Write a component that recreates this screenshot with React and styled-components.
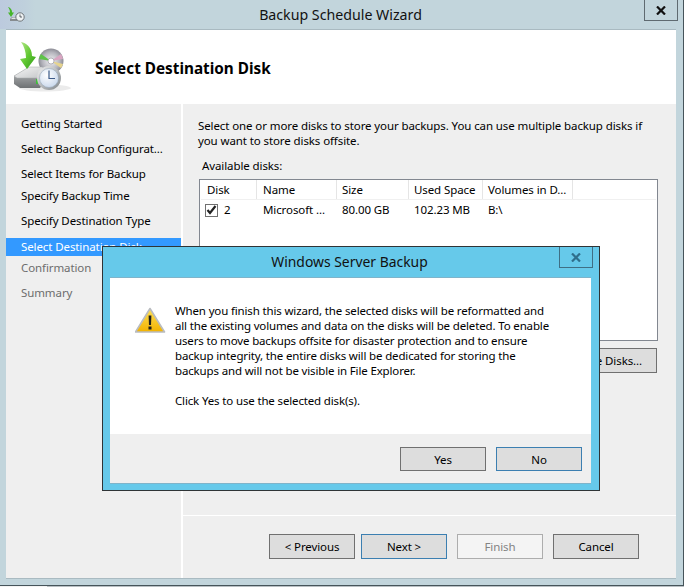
import styled, { createGlobalStyle } from "styled-components";

const GlobalStyle = createGlobalStyle`
  html, body {
    margin: 0;
    padding: 0;
    background: #e9edef;
    overflow: hidden;
  }
  body {
    font-family: "Noto Sans", "Open Sans", sans-serif;
    font-size: 11.5px;
    color: #000;
  }
`;

const Page = styled.div`
  position: relative;
  width: 684px;
  height: 587px;
  overflow: hidden;
`;

const Window = styled.div`
  box-sizing: border-box;
  width: 684px;
  height: 586px;
  background: #c2d5dc;
  border-right: 1px solid #46545a;
  border-bottom: 1px solid #46545a;
  display: flex;
  flex-direction: column;
`;

const TitleBar = styled.div`
  height: 29px;
  display: flex;
  align-items: flex-start;
  flex-shrink: 0;
`;

const TitleIconBox = styled.div`
  width: 35px;
  height: 29px;
  background: linear-gradient(90deg, #bccade 0%, #bfd0dc 70%, #c2d5dc 100%);
  padding: 5px 0 0 8px;
  box-sizing: border-box;
`;

const Title = styled.div`
  flex: 1;
  padding-left: 2px;
  text-align: center;
  font-size: 14.2px;
  line-height: 29px;
  color: #111;
`;

const CloseButton = styled.div`
  box-sizing: border-box;
  width: 34px;
  height: 21px;
  margin-right: ${(props) => props.$right || "5px"};
  border: 1px solid ${(props) => props.$line || "#5f6a70"};
  border-top: none;
  display: flex;
  align-items: center;
  justify-content: center;
`;

const Client = styled.div`
  flex: 1;
  margin: 0 7px 7px 6px;
  display: flex;
  flex-direction: column;
  border-top: 1px solid #a9bac1;
  box-shadow: 0 1px 0 #a9bac1;
  background: #efefef;
`;

const Header = styled.div`
  height: 74px;
  flex-shrink: 0;
  background: #fff;
  display: flex;
  align-items: center;
  padding-left: 7px;
`;

const HeaderText = styled.h1`
  margin: 0 0 0 22px;
  font-size: 15.3px;
  font-weight: 700;
  line-height: 20px;
  position: relative;
  top: 1px;
`;

const Body = styled.div`
  flex: 1;
  display: flex;
  min-height: 0;
`;

const Nav = styled.div`
  width: 175px;
  flex-shrink: 0;
  padding-top: 11px;
  box-sizing: border-box;
`;

const NavItem = styled.div`
  height: 18px;
  line-height: 18px;
  padding-left: 15px;
  margin-bottom: ${(props) => props.$gap}px;
  white-space: nowrap;
  letter-spacing: -0.1px;
  color: ${(props) =>
    props.$active ? "#fff" : props.$muted ? "#6d6d6d" : "#000"};
  background: ${(props) => (props.$active ? "#3399ff" : "transparent")};
`;

const Main = styled.div`
  flex: 1;
  border-left: 2px solid #fff;
  display: flex;
  flex-direction: column;
  min-width: 0;
`;

const Content = styled.div`
  height: 412px;
  flex-shrink: 0;
  box-sizing: border-box;
  padding: 14px 18px 0 15px;
  border-bottom: 1px solid #fff;
`;

const Intro = styled.p`
  margin: 0;
  line-height: 15px;
  letter-spacing: -0.1px;
  white-space: nowrap;
`;

const ListLabel = styled.div`
  margin: 10px 0 0 4px;
  line-height: 15px;
  letter-spacing: -0.1px;
`;

const DiskList = styled.div`
  box-sizing: border-box;
  margin: 6px 0 0 1px;
  height: 162px;
  background: #fff;
  border: 1px solid #828790;
  padding: 0 1px;
`;

const HeadRow = styled.div`
  display: flex;
  height: 19px;
  border-bottom: 1px solid #f0f0f0;
`;

const HeadCell = styled.div`
  box-sizing: border-box;
  width: ${(props) => props.$w}px;
  padding-left: ${(props) => props.$pad || 5}px;
  line-height: 19px;
  letter-spacing: -0.1px;
  white-space: nowrap;
  border-right: 1px solid #e5e5e5;
`;

const DiskRow = styled.div`
  display: flex;
  height: 20px;
  align-items: center;
`;

const DiskCell = styled(HeadCell)`
  display: flex;
  align-items: center;
  border-right: none;
  line-height: 20px;
`;

const Check = styled.div`
  box-sizing: border-box;
  width: 13px;
  height: 13px;
  margin: 0 6px 0 -2px;
  border: 1px solid #707070;
  display: flex;
  align-items: center;
  justify-content: center;
`;

const ListActions = styled.div`
  display: flex;
  justify-content: flex-end;
  margin-top: 7px;
  padding-right: 1px;
`;

const Button = styled.div`
  box-sizing: border-box;
  width: ${(props) => props.$w || 86}px;
  height: ${(props) => props.$h || 25}px;
  display: flex;
  align-items: center;
  justify-content: center;
  white-space: nowrap;
  letter-spacing: -0.1px;
  background: ${(props) => (props.$disabled ? "#f4f4f4" : "#dddddd")};
  color: ${(props) => (props.$disabled ? "#838383" : "#000")};
  border: 1px solid
    ${(props) =>
      props.$disabled ? "#adadad" : props.$default ? "#3c7fb1" : "#707070"};
`;

const Footer = styled.div`
  flex: 1;
  display: flex;
  align-items: flex-start;
  padding: 18px 37px 0 86px;
`;

const FooterGap = styled.div`
  width: ${(props) => props.$w}px;
  flex-shrink: 0;
`;

const Dialog = styled.div`
  position: absolute;
  left: 102px;
  top: 246px;
  box-sizing: border-box;
  width: 498px;
  height: 245px;
  background: #66c9ea;
  border: 1px solid #2f3436;
  display: flex;
  flex-direction: column;
`;

const DialogTitleBar = styled.div`
  height: 30px;
  flex-shrink: 0;
  display: flex;
  align-items: flex-start;
`;

const DialogTitle = styled.div`
  flex: 1;
  padding-left: 37px;
  text-align: center;
  font-size: 13.9px;
  line-height: 30px;
  color: #111;
`;

const DialogClient = styled.div`
  flex: 1;
  margin: 0 8px 7px 7px;
  display: flex;
  flex-direction: column;
  border-top: 1px solid #7fb4ca;
  box-shadow: 0 1px 0 #7fb4ca;
  background: #efefef;
`;

const Message = styled.div`
  height: 156px;
  flex-shrink: 0;
  box-sizing: border-box;
  background: #fff;
  padding: 25px 0 0 25px;
  display: flex;
`;

const WarnIcon = styled.div`
  width: 40px;
  flex-shrink: 0;
  padding-top: 4px;
`;

const MessageText = styled.div`
  line-height: 15px;
  letter-spacing: -0.15px;
  white-space: nowrap;
`;

const MessageLine = styled.div`
  margin-top: ${(props) => props.$gap || 0}px;
`;

const DialogActions = styled.div`
  flex: 1;
  display: flex;
  justify-content: flex-end;
  gap: 10px;
  padding: 13px 9px 0 0;
`;

const BottomStrip = styled.div`
  height: 1px;
  background: linear-gradient(90deg, #f3f3f3 47px, #b9c0c4 47px);
`;

const SmallIcon = () => (
  <svg width="19" height="18" viewBox="0 0 19 18">
    <path d="M0 2c2 .5 4 2 4.200 5.500H6L3 12 0 7.500h2C2 5.500 1.200 3.500 0 2z" fill="#46b52a" />
    <path d="M2 14l2-2h5v4H2z" fill="#868b8f" />
    <path d="M3 14l1.500-1.500H9V14z" fill="#e2e4e6" />
    <circle cx="12" cy="12" r="4.200" fill="#eef1f3" stroke="#6d7478" />
    <path d="M12 9.500V12h2" fill="none" stroke="#3b4348" strokeWidth="0.800" />
  </svg>
);

const WizardIcon = () => (
  <svg width="60" height="54" viewBox="0 0 60 54">
    <defs>
      <linearGradient id="arrowFill" x1="0" y1="0" x2="1" y2="1">
        <stop offset="0" stopColor="#b5e88a" />
        <stop offset="0.5" stopColor="#62c832" />
        <stop offset="1" stopColor="#2d9a1a" />
      </linearGradient>
      <linearGradient id="driveTop" x1="0" y1="0" x2="1" y2="1">
        <stop offset="0" stopColor="#f6f6f6" />
        <stop offset="1" stopColor="#c4c6c8" />
      </linearGradient>
      <linearGradient id="driveFront" x1="0" y1="0" x2="0" y2="1">
        <stop offset="0" stopColor="#c2c4c6" />
        <stop offset="1" stopColor="#6e7173" />
      </linearGradient>
      <radialGradient id="discFill" cx="0.5" cy="0.5" r="0.5">
        <stop offset="0" stopColor="#f4f4f6" />
        <stop offset="0.7" stopColor="#b4b4bc" />
        <stop offset="1" stopColor="#8d8d96" />
      </radialGradient>
      <radialGradient id="faceFill" cx="0.4" cy="0.35" r="0.75">
        <stop offset="0" stopColor="#ffffff" />
        <stop offset="1" stopColor="#c5d5ea" />
      </radialGradient>
      <linearGradient id="rimFill" x1="0" y1="0" x2="1" y2="1">
        <stop offset="0" stopColor="#f2f2f2" />
        <stop offset="1" stopColor="#7f8589" />
      </linearGradient>
    </defs>
    <ellipse cx="32" cy="48" rx="26" ry="3.500" fill="#000" opacity="0.08" />
    <circle cx="38" cy="21" r="12.500" fill="url(#discFill)" />
    <path d="M38 21L28 14a12.500 12.500 0 0 0-2 5z" fill="#5ec24a" />
    <path d="M38 21L50 19a12.500 12.500 0 0 0-2-5z" fill="#d9a6c2" />
    <path d="M38 21L50 24a12.500 12.500 0 0 1-2 4z" fill="#e6d48e" />
    <circle cx="38" cy="21" r="3" fill="#fff" stroke="#8a8a92" strokeWidth="0.600" />
    <path d="M1 36l15-9h14l3 12-6 9H7l-6-4z" fill="url(#driveFront)" />
    <path d="M1 36l15-9h14l-4 11H4z" fill="url(#driveTop)" stroke="#a5a8aa" strokeWidth="0.500" />
    <path d="M23 39h2v5h-2z" fill="#3fbf3a" />
    <path
      d="M8 2C13 3 19 7 19 16L23 17 14 29 7 19 13 18C13 12 11 6 8 2z"
      fill="url(#arrowFill)"
    />
    <circle cx="36" cy="38" r="12" fill="url(#rimFill)" />
    <circle cx="36" cy="38" r="9.500" fill="url(#faceFill)" stroke="#8fa0b2" strokeWidth="0.500" />
    <path d="M36 30.500V38.500h6" fill="none" stroke="#3d5a88" strokeWidth="1.200" />
  </svg>
);

const WarningIcon = () => (
  <svg width="31" height="27" viewBox="0 0 31 27">
    <defs>
      <linearGradient id="warnFill" x1="0" y1="0" x2="0" y2="1">
        <stop offset="0" stopColor="#ffe15a" />
        <stop offset="1" stopColor="#f2b200" />
      </linearGradient>
    </defs>
    <path
      d="M15 1.500L29.500 25H.5z"
      fill="url(#warnFill)"
      stroke="#b9bcc0"
      strokeWidth="1.600"
      strokeLinejoin="round"
    />
    <path d="M13.600 8.500h2.800l-.4 9.500h-2z" fill="#20201c" />
    <rect x="13.500" y="19.500" width="3" height="3" fill="#20201c" />
  </svg>
);

const CloseGlyph = ({ color }) => (
  <svg width="10" height="9" viewBox="0 0 10 9">
    <path
      d="M1 .5l8 8M9 .5l-8 8"
      fill="none"
      stroke={color}
      strokeWidth="2.200"
    />
  </svg>
);

const CheckMark = () => (
  <svg width="11" height="10" viewBox="0 0 11 10">
    <path d="M1.500 5l2.500 3 5.500-7" fill="none" stroke="#222" strokeWidth="2.200" />
  </svg>
);

const steps = [
  { label: "Getting Started", gap: 7 },
  { label: "Select Backup Configurat...", gap: 7 },
  { label: "Select Items for Backup", gap: 4 },
  { label: "Specify Backup Time", gap: 7 },
  { label: "Specify Destination Type", gap: 8 },
  { label: "Select Destination Disk", gap: 3, active: true },
  { label: "Confirmation", gap: 7, muted: true },
  { label: "Summary", gap: 7, muted: true },
];

const columns = [
  { key: "disk", title: "Disk", w: 56, pad: 6 },
  { key: "name", title: "Name", w: 80, pad: 6 },
  { key: "size", title: "Size", w: 72, pad: 5 },
  { key: "used", title: "Used Space", w: 74, pad: 5 },
  { key: "vols", title: "Volumes in D...", w: 90, pad: 5 },
];

const App = () => {
  return (
    <Page>
      <GlobalStyle />
      <Window>
        <TitleBar>
          <TitleIconBox>
            <SmallIcon />
          </TitleIconBox>
          <Title>Backup Schedule Wizard</Title>
          <CloseButton>
            <CloseGlyph color="#111" />
          </CloseButton>
        </TitleBar>
        <Client>
          <Header>
            <WizardIcon />
            <HeaderText>Select Destination Disk</HeaderText>
          </Header>
          <Body>
            <Nav>
              {steps.map((step) => (
                <NavItem
                  key={step.label}
                  $gap={step.gap}
                  $active={step.active}
                  $muted={step.muted}
                >
                  {step.label}
                </NavItem>
              ))}
            </Nav>
            <Main>
              <Content>
                <Intro>
                  Select one or more disks to store your backups. You can use
                  multiple backup disks if
                  <br />
                  you want to store disks offsite.
                </Intro>
                <ListLabel>Available disks:</ListLabel>
                <DiskList>
                  <HeadRow>
                    {columns.map((col) => (
                      <HeadCell key={col.key} $w={col.w} $pad={col.pad}>
                        {col.title}
                      </HeadCell>
                    ))}
                  </HeadRow>
                  <DiskRow>
                    <DiskCell $w={56} $pad={6}>
                      <Check>
                        <CheckMark />
                      </Check>
                      2
                    </DiskCell>
                    <DiskCell $w={80} $pad={6}>
                      Microsoft ...
                    </DiskCell>
                    <DiskCell $w={72}>80.00 GB</DiskCell>
                    <DiskCell $w={74}>102.23 MB</DiskCell>
                    <DiskCell $w={90}>B:\</DiskCell>
                  </DiskRow>
                </DiskList>
                <ListActions>
                  <Button $w={165}>Show All Available Disks...</Button>
                </ListActions>
              </Content>
              <Footer>
                <Button>&lt; Previous</Button>
                <FooterGap $w={6} />
                <Button $default>Next &gt;</Button>
                <FooterGap $w={10} />
                <Button $disabled>Finish</Button>
                <FooterGap $w={10} />
                <Button>Cancel</Button>
              </Footer>
            </Main>
          </Body>
        </Client>
      </Window>
      <BottomStrip />
      <Dialog>
        <DialogTitleBar>
          <DialogTitle>Windows Server Backup</DialogTitle>
          <CloseButton $right="6px" $line="#3f6f85">
            <CloseGlyph color="#2f6f8c" />
          </CloseButton>
        </DialogTitleBar>
        <DialogClient>
          <Message>
            <WarnIcon>
              <WarningIcon />
            </WarnIcon>
            <MessageText>
              <MessageLine>
                When you finish this wizard, the selected disks will be
                reformatted and
              </MessageLine>
              <MessageLine>
                all the existing volumes and data on the disks will be deleted.
                To enable
              </MessageLine>
              <MessageLine>
                users to move backups offsite for disaster protection and to
                ensure
              </MessageLine>
              <MessageLine>
                backup integrity, the entire disks will be dedicated for storing
                the
              </MessageLine>
              <MessageLine>backups and will not be visible in File Explorer.</MessageLine>
              <MessageLine $gap={15}>Click Yes to use the selected disk(s).</MessageLine>
            </MessageText>
          </Message>
          <DialogActions>
            <Button $h={24}>Yes</Button>
            <Button $h={24} $default>
              No
            </Button>
          </DialogActions>
        </DialogClient>
      </Dialog>
    </Page>
  );
};

export default App;
